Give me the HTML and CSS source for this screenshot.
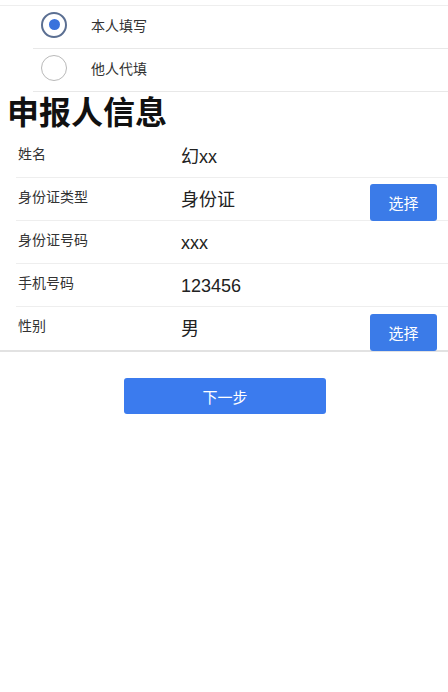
FILE: index.html
```html
<!DOCTYPE html>
<html lang="zh">
<head>
<meta charset="utf-8">
<title>申报人信息</title>
<link rel="stylesheet" href="styles.css">
</head>
<body>
<div class="page">
  <div class="radio-group">
    <label class="radio-item">
      <span class="radio checked"><span class="dot"></span></span>
      <span class="radio-text">本人填写</span>
    </label>
    <label class="radio-item">
      <span class="radio"></span>
      <span class="radio-text">他人代填</span>
    </label>
  </div>

  <h1 class="title">申报人信息</h1>

  <div class="form">
    <div class="row">
      <div class="label">姓名</div>
      <div class="value">幻xx</div>
    </div>
    <div class="row">
      <div class="label">身份证类型</div>
      <div class="value">身份证</div>
      <button class="pick">选择</button>
    </div>
    <div class="row">
      <div class="label">身份证号码</div>
      <div class="value">xxx</div>
    </div>
    <div class="row">
      <div class="label">手机号码</div>
      <div class="value">123456</div>
    </div>
    <div class="row">
      <div class="label">性别</div>
      <div class="value">男</div>
      <button class="pick">选择</button>
    </div>
  </div>

  <div class="actions">
    <button class="next">下一步</button>
  </div>
</div>
</body>
</html>
```

FILE: styles.css
```css
* { box-sizing: border-box; }
html, body {
  margin: 0;
  padding: 0;
  background: #fff;
}
body {
  font-family: "Liberation Sans", "Noto Sans CJK SC", sans-serif;
  color: #222;
}
.page {
  width: 448px;
}
.radio-group {
  margin-top: 5px;
  border-top: 1px solid #eeeeee;
}
.radio-item {
  display: flex;
  align-items: center;
  height: 43px;
  margin-left: 33px;
  padding-left: 8px;
  padding-bottom: 5px;
  border-bottom: 1px solid #e8e8e8;
}
.radio {
  width: 26px;
  height: 26px;
  border-radius: 50%;
  border: 1.5px solid #b9b9b9;
  display: flex;
  align-items: center;
  justify-content: center;
  flex: none;
}
.radio.checked {
  border: 2px solid #5b6f92;
}
.radio .dot {
  width: 11px;
  height: 11px;
  border-radius: 50%;
  background: #3a72dc;
}
.radio-text {
  margin-left: 24px;
  font-size: 14px;
  color: #333;
}
.title {
  margin: 0;
  padding-left: 7px;
  height: 43px;
  line-height: 42px;
  font-size: 32px;
  font-weight: 700;
  color: #111;
}
.form {
  border-bottom: 2px solid #e2e2e2;
}
.row {
  display: flex;
  height: 43px;
  margin-left: 16px;
  padding-left: 2px;
  border-bottom: 1px solid #eeeeee;
}
.row:last-child {
  border-bottom: none;
}
.label {
  width: 163px;
  flex: none;
  padding-top: 9px;
  font-size: 14px;
  line-height: 20px;
  color: #333;
}
.value {
  flex: 1;
  padding-top: 10px;
  font-size: 18px;
  line-height: 24px;
  color: #222;
}
.pick {
  align-self: flex-end;
  width: 67px;
  height: 37px;
  margin-right: 11px;
  margin-bottom: -1px;
  border: none;
  border-radius: 3px;
  background: #3b7be8;
  color: #fff;
  font-family: inherit;
  font-size: 15px;
  padding: 0;
}
.actions {
  display: flex;
  justify-content: center;
  padding-top: 26px;
}
.next {
  width: 202px;
  height: 36px;
  margin-left: 2px;
  border: none;
  border-radius: 3px;
  background: #3b7bee;
  color: #fff;
  font-family: inherit;
  font-size: 15px;
  padding: 0;
}
```
